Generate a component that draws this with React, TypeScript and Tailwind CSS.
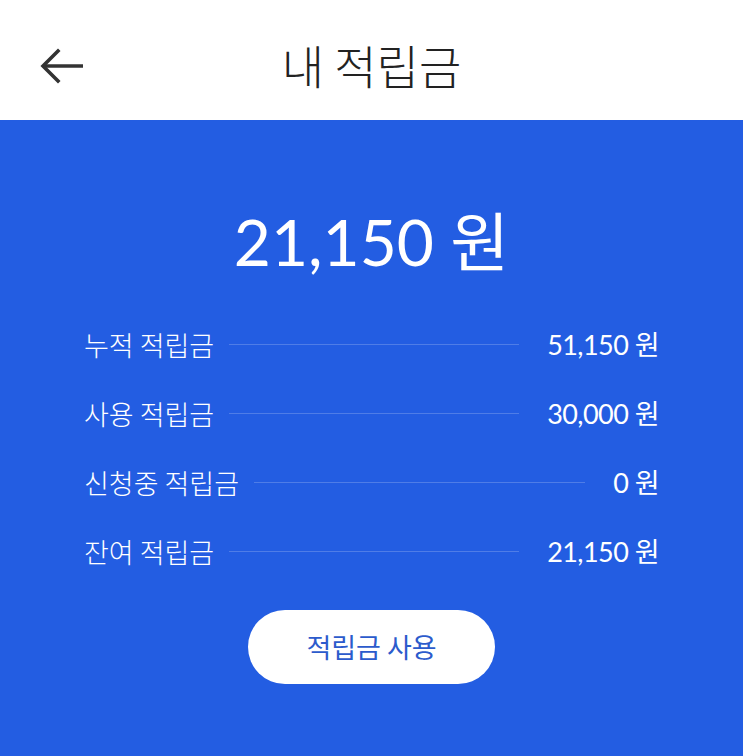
import React from "react";

const rows = [
  { label: "누적 적립금", value: "51,150 원" },
  { label: "사용 적립금", value: "30,000 원" },
  { label: "신청중 적립금", value: "0 원" },
  { label: "잔여 적립금", value: "21,150 원" },
];

const ko = { fontFamily: '"Noto Sans CJK KR", "Noto Sans", sans-serif' };
const num = { fontFamily: 'Lato, "Noto Sans CJK KR", sans-serif' };

export default function App() {
  return (
    <div className="w-[743px] h-[756px] bg-[#235de2] flex flex-col overflow-hidden">
      <header className="relative h-[120px] bg-white flex items-center justify-center shrink-0">
        <svg
          className="absolute left-[39px] top-[48px]"
          width="46"
          height="36"
          viewBox="0 0 46 36"
          fill="none"
          stroke="#333333"
          strokeWidth="3.6"
        >
          <path d="M4 18 H44" />
          <path d="M19 3 L4 18 L19 33" strokeLinecap="square" strokeLinejoin="miter" />
        </svg>
        <h1 className="mt-[8px] text-[46px] font-light text-[#222222] leading-none" style={ko}>
          내 적립금
        </h1>
      </header>

      <section className="flex-1 flex flex-col items-center">
        <div className="mt-[82px] h-[80px] flex items-center justify-center text-white text-[64px] leading-none" style={num}>
          21,150 원
        </div>

        <div className="mt-[28px] w-full px-[84px] flex flex-col">
          {rows.map((r) => (
            <div key={r.label} className="h-[69px] flex items-center text-white">
              <span className="text-[27px] leading-none font-light" style={ko}>
                {r.label}
              </span>
              <div className="flex-1 ml-[15px] mr-[28px] h-px bg-white/20" />
              <span className="text-[27px] leading-none tracking-[-0.02em]" style={num}>
                {r.value}
              </span>
            </div>
          ))}
        </div>

        <button
          className="mt-[24px] w-[247px] h-[74px] rounded-full bg-white text-[#2c5bcc] text-[27px] flex items-center justify-center"
          style={ko}
        >
          적립금 사용
        </button>
      </section>
    </div>
  );
}
